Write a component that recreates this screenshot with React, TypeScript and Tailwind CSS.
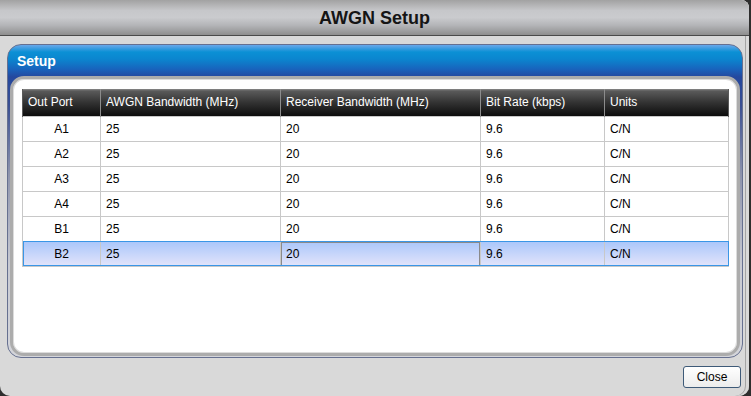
import React from 'react';

const rows = [
  { port: 'A1', awgn: '25', rx: '20', rate: '9.6', units: 'C/N' },
  { port: 'A2', awgn: '25', rx: '20', rate: '9.6', units: 'C/N' },
  { port: 'A3', awgn: '25', rx: '20', rate: '9.6', units: 'C/N' },
  { port: 'A4', awgn: '25', rx: '20', rate: '9.6', units: 'C/N' },
  { port: 'B1', awgn: '25', rx: '20', rate: '9.6', units: 'C/N' },
  { port: 'B2', awgn: '25', rx: '20', rate: '9.6', units: 'C/N' },
];

const headers = ['Out Port', 'AWGN Bandwidth (MHz)', 'Receiver Bandwidth (MHz)', 'Bit Rate (kbps)', 'Units'];
const widths = ['w-[78px]', 'w-[180px]', 'w-[200px]', 'w-[124px]', 'w-[124px]'];

export default function App() {
  const selected = 5;

  return (
    <div className="w-[751px] h-[396px] bg-[#2e2e2e] overflow-hidden font-['Liberation_Sans',Arial,sans-serif]">
      <div className="w-[749px] h-full flex flex-col bg-[#d9d9d9] rounded-tr-[8px] rounded-b-[10px] shadow-[inset_-3px_0_0_#d9d9d9,inset_-4px_0_0_#a4a4a4]">
        {/* Title bar */}
        <div className="h-[36px] shrink-0 flex items-center justify-center rounded-tr-[8px] border-b border-[#4a4a4a] bg-[linear-gradient(to_bottom,#a2a2a2_0%,#c6c7ca_30%,#cacbce_50%,#b4b5b8_72%,#8e8e8e_100%)]">
          <span className="text-[18px] font-bold text-[#151515] leading-none">AWGN Setup</span>
        </div>

        {/* Setup panel */}
        <div className="pt-[8px] pl-[7px] pr-[6px]">
          <div className="h-[314px] flex flex-col rounded-[14px] border border-[#667090] bg-[linear-gradient(to_bottom,#6aa8ea_0px,#0b90d5_7px,#0b86cf_14px,#1864bd_24px,#24489e_32px,#3a4f92_60px,#8e94ac_130px,#c8cad2_220px,#d4d5da_100%)]">
            <div className="h-[31px] shrink-0 flex items-center pl-[9px]">
              <span className="text-[14px] font-bold text-white leading-none">Setup</span>
            </div>
            <div className="flex-1 mx-[2px] mb-[1px] rounded-[14px] border-[3px] border-[#acacac] bg-white shadow-[inset_0_0_0_1px_#dcdcdc] pt-[10px] pl-[9px]">
              <table className="table-fixed border-collapse w-[706px] text-[12px] leading-none">
                <thead>
                  <tr className="h-[27px] bg-[linear-gradient(to_bottom,#8a8a8a_0px,#5a5a5a_2px,#333333_50%,#0c0c0c_100%)]">
                    {headers.map((h, i) => (
                      <th
                        key={h}
                        className={`${widths[i]} text-left font-normal text-white px-[5px] border-l border-[#8c8c8c] first:border-l-[#5a5a5a] last:border-r last:border-r-[#5a5a5a]`}
                      >
                        {h}
                      </th>
                    ))}
                  </tr>
                </thead>
                <tbody>
                  {rows.map((r, i) => {
                    const sel = i === selected;
                    return (
                      <tr
                        key={r.port}
                        className={
                          sel
                            ? 'h-[25px] text-black bg-[linear-gradient(to_bottom,#a9c6fa,#e3e4fa)] outline outline-1 -outline-offset-1 outline-[#3a96e6]'
                            : 'h-[25px] text-black'
                        }
                      >
                        <td className="text-center border border-[#c8c8c8]">{r.port}</td>
                        <td className="px-[5px] border border-[#c8c8c8]">{r.awgn}</td>
                        <td
                          className={
                            sel
                              ? 'px-[5px] border border-[#c8c8c8] shadow-[inset_0_0_0_1px_#8a8a8a]'
                              : 'px-[5px] border border-[#c8c8c8]'
                          }
                        >
                          {r.rx}
                        </td>
                        <td className="px-[5px] border border-[#c8c8c8]">{r.rate}</td>
                        <td className="px-[5px] border border-[#c8c8c8]">{r.units}</td>
                      </tr>
                    );
                  })}
                </tbody>
              </table>
            </div>
          </div>
        </div>

        {/* Footer */}
        <div className="flex justify-end pt-[8px] pr-[8px]">
          <button className="w-[58px] h-[22px] rounded-[3px] border border-[#3e5a78] bg-[linear-gradient(to_bottom,#ffffff,#ececec)] text-[12px] text-black leading-none">
            Close
          </button>
        </div>
      </div>
    </div>
  );
}
